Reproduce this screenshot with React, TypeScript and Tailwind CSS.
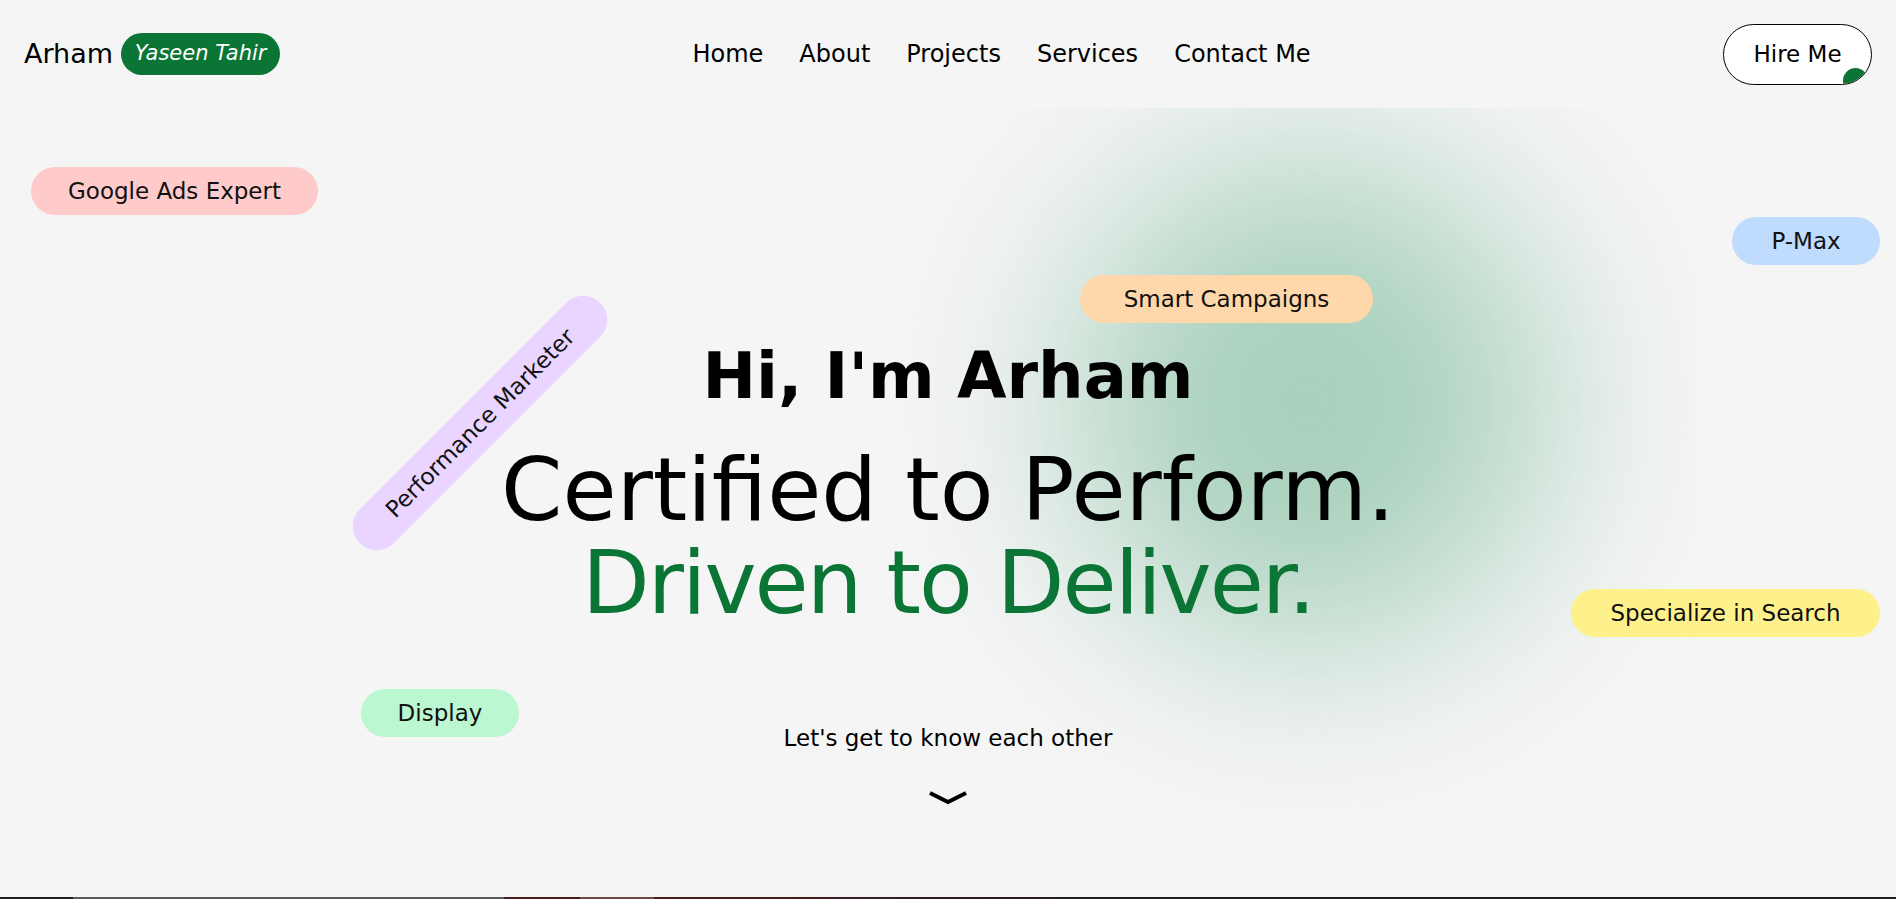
import React from 'react';

const navLinks = ['Home', 'About', 'Projects', 'Services', 'Contact Me'];

// floating skill tags around the hero
const tags = [
  { label: 'Google Ads Expert', cls: 'left-[31px] top-[59px] w-[287px] bg-[#ffcaca]' },
  { label: 'P-Max', cls: 'right-[16px] top-[109px] w-[148px] bg-[#bfdbfe]' },
  { label: 'Smart Campaigns', cls: 'left-[1080px] top-[167px] w-[293px] bg-[#fed7aa]' },
  { label: 'Specialize in Search', cls: 'right-[16px] top-[481px] w-[309px] bg-[#fef08a]' },
  { label: 'Display', cls: 'left-[361px] top-[581px] w-[158px] bg-[#bbf7d0]' },
];

const App: React.FC = () => {
  return (
    <div className="h-[899px] flex flex-col bg-[#f5f5f5] text-black font-['DejaVu_Sans',sans-serif]">
      {/* Header */}
      <header className="h-[108px] shrink-0 flex items-center justify-between px-[24px]">
        <div className="flex items-center gap-[8px]">
          <span className="text-[27px]">Arham</span>
          <span className="h-[42px] w-[159px] rounded-full bg-[#0a7535] text-white italic text-[21px] flex items-center justify-center">
            Yaseen Tahir
          </span>
        </div>
        <nav className="flex items-center gap-9 text-[24px]">
          {navLinks.map((link) => (
            <a key={link} href="#" className="text-black">
              {link}
            </a>
          ))}
        </nav>
        <button className="relative w-[149px] h-[61px] rounded-full border border-black bg-white overflow-hidden text-[23px]">
          Hire Me
          <span className="absolute left-[119px] top-[43px] w-[25px] h-[25px] rounded-full bg-[#0a7535]" />
        </button>
      </header>

      {/* Hero */}
      <section className="relative flex-1 overflow-hidden flex flex-col items-center">
        <div className="absolute left-[900px] top-0 w-[797px] h-[720px] overflow-hidden pointer-events-none">
          <div className="absolute left-[170px] top-[50px] w-[480px] h-[490px] rounded-full bg-[#a8d0bc] blur-[95px]" />
        </div>

        {tags.map((tag) => (
          <div
            key={tag.label}
            className={`absolute h-[48px] rounded-full flex items-center justify-center text-[23px] text-[#111] ${tag.cls}`}
          >
            {tag.label}
          </div>
        ))}

        <div className="absolute left-[310px] top-[291px] w-[340px] h-[48px] rounded-full bg-[#e9d5ff] flex items-center justify-center text-[23px] text-[#111] -rotate-45">
          Performance Marketer
        </div>

        <h1 className="relative mt-[236px] text-[64px] leading-[64px] font-bold">Hi, I'm Arham</h1>
        <h2 className="relative mt-[35px] text-[88px] leading-[93px] text-center">
          <span className="block">Certified to Perform.</span>
          <span className="block text-[#0a7535] tracking-[-2px]">Driven to Deliver.</span>
        </h2>
        <p className="relative mt-[95px] text-[23px] leading-[28px]">Let's get to know each other</p>
        <svg className="relative mt-[38px]" width="42" height="16" viewBox="0 0 42 16" fill="none">
          <polyline points="3,3 21,12 39,3" stroke="#000" strokeWidth="4" />
        </svg>
      </section>

      {/* bottom strip */}
      <div className="h-[2px] shrink-0 flex bg-[#1e1e1e]">
        <div className="w-[73px]" />
        <div className="w-[431px] bg-[#5a5a5a]" />
        <div className="w-[76px] bg-[#4a1a1e]" />
        <div className="w-[74px] bg-[#6a4a4a]" />
        <div className="w-[495px] bg-gradient-to-r from-[#4a1a1e] to-[#1e1e1e]" />
      </div>
    </div>
  );
};

export default App;
